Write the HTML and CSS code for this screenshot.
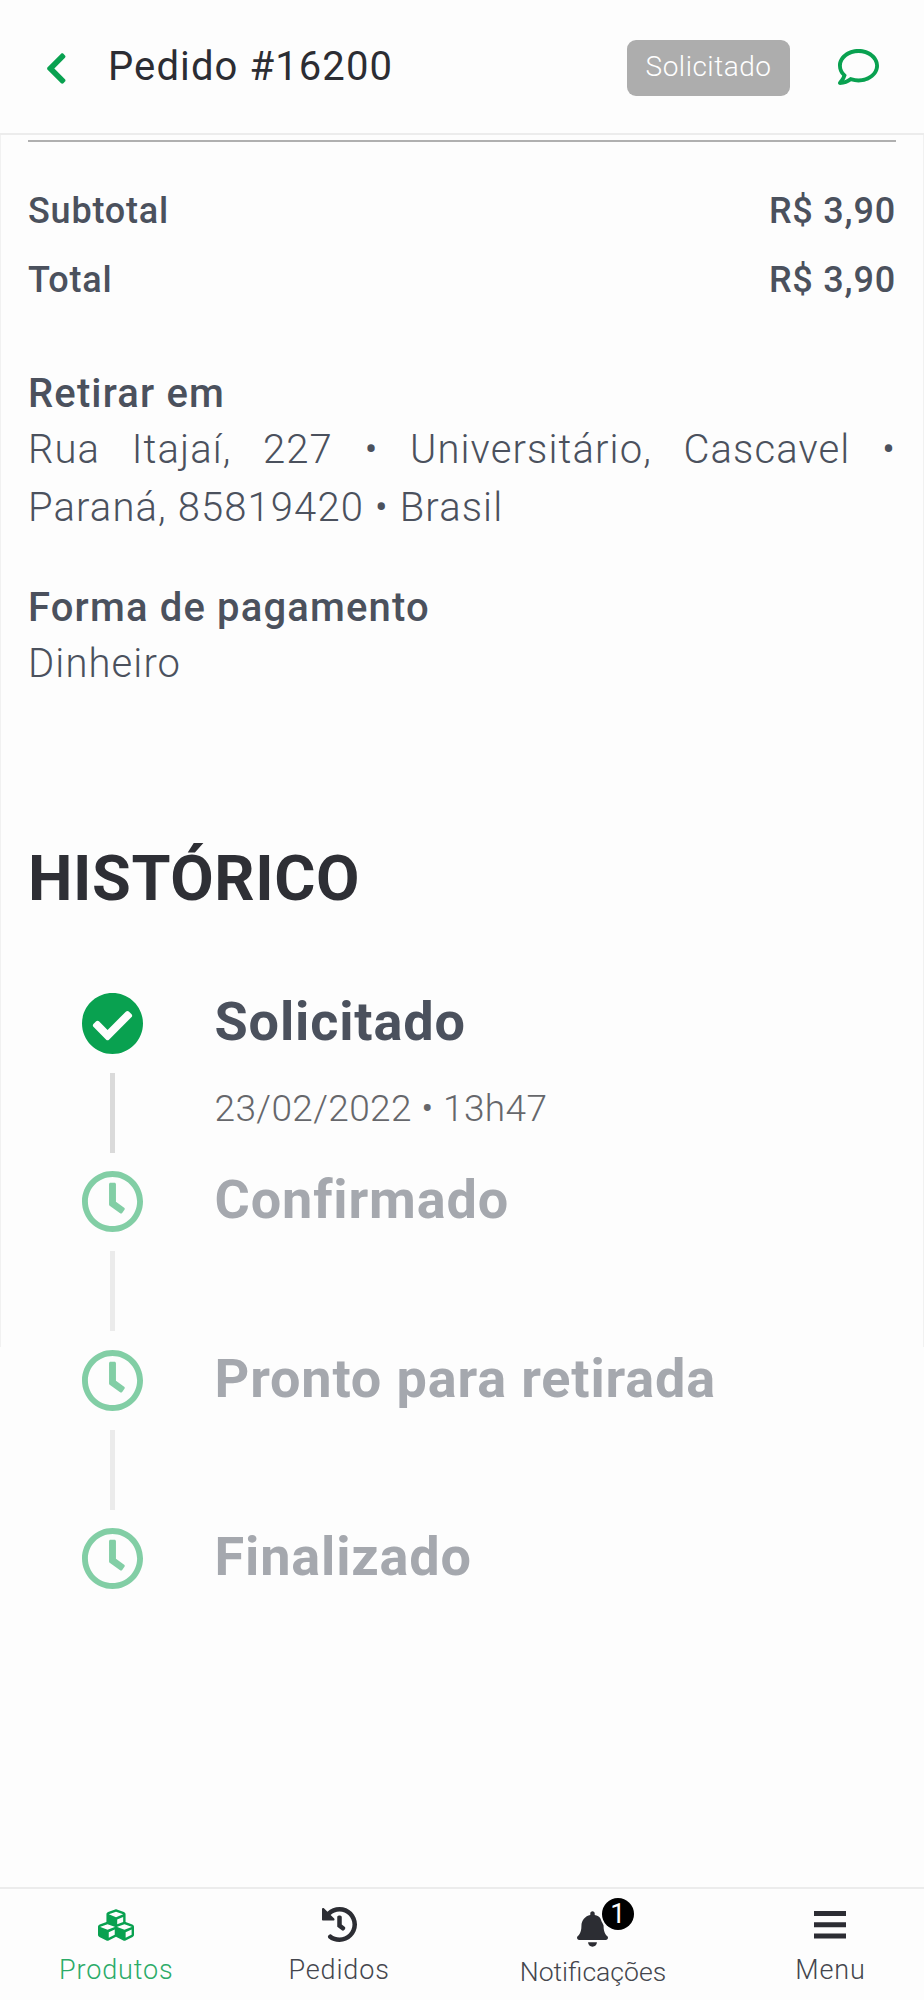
FILE: index.html
```html
<!DOCTYPE html>
<html lang="pt-BR">
<head>
<meta charset="utf-8">
<title>Pedido #16200</title>
<link rel="stylesheet" href="styles.css">
</head>
<body>
<div class="app">
  <header class="topbar">
    <svg class="back" viewBox="26 34 274 444"><path d="M34.520 239.030L228.870 44.690c9.370-9.370 24.570-9.370 33.940 0l22.670 22.670c9.360 9.360 9.370 24.520.040 33.900L131.490 256l154.020 154.750c9.340 9.380 9.320 24.540-.040 33.900l-22.670 22.670c-9.370 9.370-24.570 9.370-33.940 0L34.520 272.970c-9.370-9.370-9.370-24.570 0-33.940z"/></svg>
    <h1 class="title"><span>Pedido #16200</span></h1>
    <span class="status"><span>Solicitado</span></span>
    <svg class="chat" viewBox="0 32 512 448"><path d="M256 32C114.600 32 0 125.100 0 240c0 47.600 19.900 91.200 52.900 126.300C38 405.700 7 439.100 6.500 439.500c-6.600 7-8.400 17.200-4.600 26S14.400 480 24 480c61.500 0 110-25.700 139.100-46.300C192 442.800 223.200 448 256 448c141.400 0 256-93.100 256-208S397.400 32 256 32zm0 368c-26.700 0-53.100-4.100-78.400-12.100l-22.700-7.200-19.500 13.800c-14.300 10.100-33.900 21.400-57.500 29 7.300-12.100 14.400-25.700 19.900-40.200l10.600-28.100-20.600-21.800C69.700 314.100 48 282.200 48 240c0-88.200 93.300-160 208-160s208 71.800 208 160-93.300 160-208 160z"/></svg>
  </header>
  <main class="content">
    <div class="sums">
      <div class="sum"><span>Subtotal</span><span>R$ 3,90</span></div>
      <div class="sum"><span>Total</span><span>R$ 3,90</span></div>
    </div>
    <section class="info">
      <h3>Retirar em</h3>
      <p>Rua Itajaí, 227 • Universitário, Cascavel • Paraná, 85819420 • Brasil</p>
    </section>
    <section class="info">
      <h3>Forma de pagamento</h3>
      <p>Dinheiro</p>
    </section>
    <h2 class="heading">HISTÓRICO</h2>
    <ol class="steps">
      <li class="step">
        <div class="rail"><svg class="mark" viewBox="8 8 496 496"><path d="M504 256c0 136.967-111.033 248-248 248S8 392.967 8 256 119.033 8 256 8s248 111.033 248 248zM227.314 387.314l184-184c6.248-6.248 6.248-16.379 0-22.627l-22.627-22.627c-6.248-6.249-16.379-6.249-22.628 0L216 308.118l-70.059-70.059c-6.248-6.248-16.379-6.248-22.628 0l-22.627 22.627c-6.248 6.248-6.248 16.379 0 22.627l104 104c6.249 6.249 16.379 6.249 22.628.001z"/></svg><i class="line"></i></div>
        <div class="step-text"><h4>Solicitado</h4><time>23/02/2022 • 13h47</time></div>
      </li>
      <li class="step pending">
        <div class="rail"><svg class="mark" viewBox="8 8 496 496"><use href="#clock"/></svg><i class="line"></i></div>
        <div class="step-text"><h4>Confirmado</h4></div>
      </li>
      <li class="step pending">
        <div class="rail"><svg class="mark" viewBox="8 8 496 496"><use href="#clock"/></svg><i class="line"></i></div>
        <div class="step-text"><h4>Pronto para retirada</h4></div>
      </li>
      <li class="step pending">
        <div class="rail"><svg class="mark" viewBox="8 8 496 496"><path id="clock" d="M256 8C119 8 8 119 8 256s111 248 248 248 248-111 248-248S393 8 256 8zm0 448c-110.500 0-200-89.500-200-200S145.500 56 256 56s200 89.500 200 200-89.500 200-200 200zm61.800-104.400l-84.900-61.700c-3.100-2.300-4.900-5.900-4.900-9.700V116c0-6.600 5.400-12 12-12h32c6.600 0 12 5.400 12 12v141.700l66.800 48.600c5.400 3.900 6.500 11.400 2.600 16.800L334.600 349c-3.900 5.300-11.400 6.500-16.800 2.600z"/></svg></div>
        <div class="step-text"><h4>Finalizado</h4></div>
      </li>
    </ol>
  </main>
  <nav class="tabs">
    <a class="tab tab-products">
      <svg class="i-cubes" viewBox="0 32 512 448"><path d="M488.600 250.200L392 214V105.500c0-15-9.300-28.400-23.400-33.700l-100-37.500c-8.100-3.100-17.100-3.100-25.300 0l-100 37.500c-14.100 5.300-23.400 18.700-23.400 33.700V214l-96.600 36.200C9.300 255.500 0 268.900 0 283.900V394c0 13.600 7.700 26.100 19.900 32.200l100 50c10.100 5.100 22.100 5.100 32.200 0l103.900-52 103.900 52c10.100 5.100 22.100 5.100 32.200 0l100-50c12.200-6.100 19.900-18.600 19.900-32.200V283.900c0-15-9.300-28.400-23.400-33.700zM358 214.800l-85 31.900v-68.200l85-37v73.300zM154 104.100l102-38.200 102 38.200v.6l-102 41.400-102-41.400v-.6zm84 291.100l-85 42.500v-79.100l85-38.800v75.400zm0-112l-102 41.400-102-41.400v-.6l102-38.200 102 38.200v.6zm240 112l-85 42.500v-79.100l85-38.800v75.400zm0-112l-102 41.400-102-41.400v-.6l102-38.200 102 38.200v.6z"/></svg>
      <span>Produtos</span>
    </a>
    <a class="tab tab-orders">
      <svg class="i-history" viewBox="8 8 496 496"><path d="M504 255.531c.253 136.640-111.180 248.372-247.820 248.468-59.015.042-113.223-20.530-155.822-54.911-11.077-8.940-11.905-25.541-1.839-35.607l11.267-11.267c8.609-8.609 22.353-9.551 31.891-1.984C173.062 425.135 212.781 440 256 440c101.705 0 184-82.311 184-184 0-101.705-82.311-184-184-184-48.814 0-93.149 18.969-126.068 49.932l50.754 50.754c10.080 10.080 2.941 27.314-11.313 27.314H24c-8.837 0-16-7.163-16-16V38.627c0-14.254 17.234-21.393 27.314-11.314l49.372 49.372C129.209 34.136 189.552 8 256 8c136.810 0 247.747 110.780 248 247.531zm-180.912 78.784l9.823-12.630c8.138-10.463 6.253-25.542-4.210-33.679L288 256.349V152c0-13.255-10.745-24-24-24h-16c-13.255 0-24 10.745-24 24v135.651l65.409 50.874c10.463 8.137 25.541 6.253 33.679-4.210z"/></svg>
      <span>Pedidos</span>
    </a>
    <a class="tab tab-alerts">
      <svg class="i-bell" viewBox="0 0 448 512"><path d="M224 512c35.320 0 63.970-28.650 63.970-64H160.030c0 35.350 28.650 64 63.970 64zm215.390-149.710c-19.320-20.760-55.470-51.990-55.470-154.290 0-77.700-54.480-139.900-127.940-155.160V32c0-17.670-14.320-32-31.980-32s-31.980 14.330-31.980 32v20.840C118.560 68.100 64.080 130.300 64.080 208c0 102.300-36.150 133.530-55.470 154.290-6 6.450-8.660 14.160-8.610 21.710.11 16.400 12.980 32 32.100 32h383.800c19.120 0 32-15.600 32.100-32 .05-7.550-2.610-15.270-8.610-21.710z"/></svg>
      <b class="count"><span>1</span></b>
      <span>Notificações</span>
    </a>
    <a class="tab tab-menu">
      <svg class="i-menu" viewBox="0 0 32 28"><path d="M0 0h32v5H0zM0 11.300h32v5H0zM0 22.500h32v5H0z"/></svg>
      <span>Menu</span>
    </a>
  </nav>
</div>
</body>
</html>
```
FILE: styles.css
```css
* { box-sizing: border-box; }
body { margin: 0; background: #fdfdfd; font-family: Roboto, "Liberation Sans", sans-serif; color: #4b515d; }
h1, h2, h3, h4, p, ol { margin: 0; padding: 0; }
svg { display: block; flex: none; fill: currentColor; }
.app { width: 924px; height: 2000px; display: flex; flex-direction: column; }

.topbar { height: 135px; border-bottom: 2px solid #ececec; padding: 0 45px 0 47px; display: flex; align-items: center; }
.back { width: 19px; height: 31px; color: #09a150; margin-top: 4px; }
.title { margin-left: 42px; margin-right: auto; font-size: 40px; line-height: 60px; font-weight: 400; letter-spacing: 1.1px; color: #2c2d33; }
.status { width: 163px; height: 56px; border-radius: 9px; background: #adadad; color: #fff; font-size: 28px; font-weight: 300; line-height: 53px; letter-spacing: .5px; text-align: center; margin-top: 2px; }
.chat { width: 41px; height: 36px; color: #09a150; margin-left: 48px; }

.content { flex: 1; padding: 5px 28px 0; background: linear-gradient(#f1f1f1, #f1f1f1) left top / 1px 1212px no-repeat, linear-gradient(#f1f1f1, #f1f1f1) right top / 1px 1212px no-repeat; }
.sums { border-top: 2px solid #b0b0b0; padding-top: 35px; margin-bottom: 51px; }
.sum { display: flex; justify-content: space-between; height: 69px; line-height: 69px; font-size: 36px; font-weight: 500; letter-spacing: .8px; }
.info { margin-bottom: 43px; }
.info h3 { font-size: 40px; line-height: 55px; font-weight: 500; letter-spacing: 1.15px; }
.info p { font-size: 40px; line-height: 58px; font-weight: 300; letter-spacing: 1.1px; text-align: justify; }
.heading { margin-top: 146px; font-size: 63px; line-height: 80px; font-weight: 700; letter-spacing: .6px; color: #2e2f35; }

.steps { list-style: none; margin-top: 74px; }
.step { display: flex; height: 178.300px; }
.rail { width: 61px; margin-left: 53.500px; display: flex; flex-direction: column; align-items: center; }
.mark { width: 61px; height: 61px; color: #09a150; }
.line { width: 5px; height: 80px; margin-top: 19px; background: #dadada; }
.pending .mark, .pending .line { opacity: .5; }
.step-text { margin-left: 72px; }
.step h4 { font-size: 54px; line-height: 58px; font-weight: 700; letter-spacing: .85px; }
.step time { display: block; margin-top: 31px; font-size: 37px; line-height: 54px; font-weight: 300; color: #66676b; letter-spacing: .38px; }
.pending h4 { color: #a5a8ae; }

.tabs { height: 113px; border-top: 2px solid #ececec; display: flex; color: #2c2d33; font-size: 27px; font-weight: 300; line-height: 36px; letter-spacing: .85px; }
.tab { position: relative; display: grid; grid-template-rows: 63px 36px; justify-items: center; align-items: center; }
.tab > span { color: #44464d; }
.tab-products { margin-left: 59px; color: #09a150; }
.tab-products > span { color: #2bab68; }
.tab-orders { margin-left: 115px; }
.tab-alerts { margin-left: 130px; font-size: 26.600px; letter-spacing: 0; grid-template-rows: 65px 36px; }
.tab-menu { margin-left: 129px; }
.i-cubes { width: 36px; height: 32px; margin-top: 8px; }
.i-history { width: 35px; height: 35px; margin-top: 8px; }
.i-bell { width: 31px; height: 36px; margin-top: 14px; }
.i-menu { width: 32px; height: 28px; margin-top: 8px; }
.count { position: absolute; left: 82px; top: 9px; width: 32px; height: 32px; border-radius: 50%; background: #000; box-shadow: 0 0 0 2px #fdfdfd; color: #fff; font-size: 27px; line-height: 32px; font-weight: 400; text-align: center; }
```
